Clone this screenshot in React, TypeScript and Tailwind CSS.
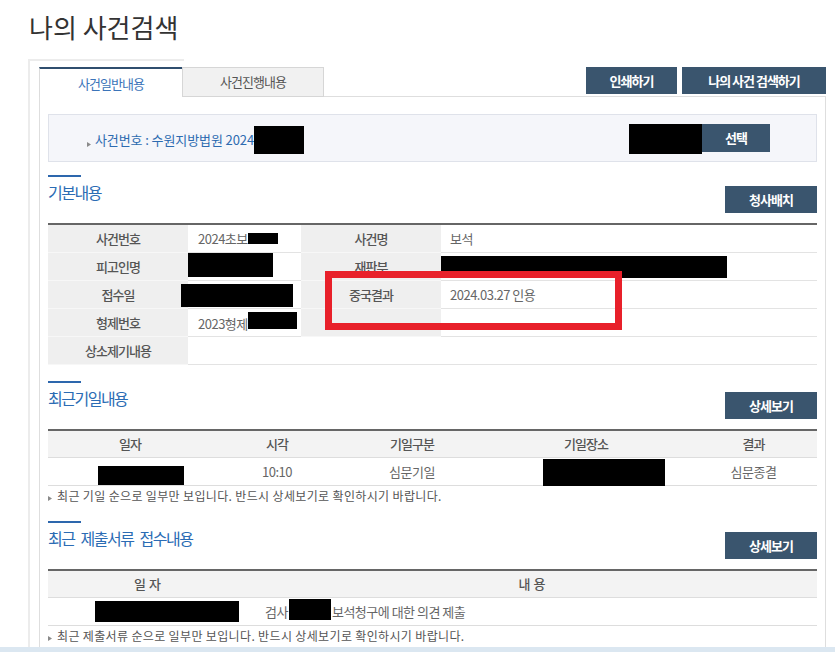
import type { ReactNode } from 'react'

const font = "font-['Noto_Sans_CJK_KR','Noto_Sans',sans-serif]"

function DarkButton({ children, className }: { children: ReactNode; className: string }) {
  return (
    <div
      className={`flex items-center justify-center bg-[#3a556e] text-[13px] font-semibold tracking-[-1px] text-white ${className}`}
    >
      {children}
    </div>
  )
}

function Bullet({ className }: { className: string }) {
  return (
    <svg width="4" height="5" viewBox="0 0 4 5" className={className}>
      <path d="M0 0 L4 2.5 L0 5 Z" fill="#8a8a8a" />
    </svg>
  )
}

function Black({ className }: { className: string }) {
  return <span className={`inline-block shrink-0 bg-black ${className}`} />
}

function SectionHeader({ title, button }: { title: string; button: string }) {
  return (
    <div className="flex h-[48px] justify-between">
      <div>
        <div className="h-[2px] w-[33px] bg-[#2d67ad]" />
        <div className="mt-[4px] text-[16px] leading-[22px] tracking-[-1.5px] text-[#2b6cb4] [word-spacing:4px]">
          {title}
        </div>
      </div>
      <DarkButton className="mt-[11px] h-[27px] w-[92px]">{button}</DarkButton>
    </div>
  )
}

function Note({ children }: { children: ReactNode }) {
  return (
    <div className="flex h-[19px] items-center text-[12px] tracking-[0.35px] text-[#555]">
      <Bullet className="mt-[6px] mr-[5px]" />
      {children}
    </div>
  )
}

function InfoRow({ label, value, label2, value2 }: { label: string; value: ReactNode; label2?: string; value2?: ReactNode }) {
  return (
    <div className="flex h-[28px]">
      <div className="flex w-[140px] items-center justify-center border-b border-[#f7f7f7] bg-[#efefef] font-medium tracking-[-1px] text-[#555]">
        {label}
      </div>
      {label2 === undefined ? (
        <div className="flex-1 border-b border-[#e3e3e3]">{value}</div>
      ) : (
        <>
          <div className="w-[113px] border-b border-[#e3e3e3]">{value}</div>
          <div className="flex w-[140px] items-center justify-center border-b border-[#f7f7f7] bg-[#efefef] font-medium tracking-[-1px] text-[#555]">
            {label2}
          </div>
          <div className="flex-1 border-b border-[#e3e3e3]">{value2}</div>
        </>
      )}
    </div>
  )
}

const headCell = 'flex items-center justify-center font-medium tracking-[-1px] text-[#555]'
const dataCell = 'flex items-center justify-center'

export default function App() {
  return (
    <div className={`relative h-[652px] w-[835px] overflow-hidden bg-white ${font}`}>
      {/* Page title */}
      <div className="h-[59px] pl-[29px] pt-[12px] text-[26px] leading-[30px] tracking-[0px] text-[#333]">
        나의 사건검색
      </div>

      <div className="ml-[28px] h-[589px] border-l-2 border-[#ececec]">
        <div className="h-[2px] w-[154px] bg-[#ececec]" />
        <div className="pl-[9px] pt-[6px]">
          {/* Tabs + top buttons */}
          <div className="flex h-[30px] w-[787px]">
            <div className="flex w-[143px] items-start justify-center border-l border-t-2 border-[#dcdcdc] border-t-[#2f4e6e] bg-white pt-[5px] text-[13px] tracking-[-1px] text-[#3b74b9]">
              사건일반내용
            </div>
            <div className="flex w-[142px] items-start justify-center border border-[#d6d6d6] bg-[#f1f1f1] pt-[4px] text-[13px] tracking-[-1px] text-[#555]">
              사건진행내용
            </div>
            <div className="flex-1 border-b border-[#dedede]" />
            <div className="flex gap-[5px] border-b border-[#dedede]">
              <DarkButton className="h-[27px] w-[91px]">인쇄하기</DarkButton>
              <DarkButton className="h-[27px] w-[144px]">나의 사건 검색하기</DarkButton>
            </div>
          </div>

          {/* Panel */}
          <div className="h-[551px] w-[787px] border-x border-[#dedede] px-[8px] pt-[17px] text-[13px] tracking-[-0.5px] text-[#666]">
            <div className="flex h-[48px] justify-between border border-[#dfe2ea] bg-[#f5f6fa]">
              <div className="mt-[3px] flex items-center pl-[38px]">
                <Bullet className="mt-[9px] mr-[4px]" />
                <span className="tracking-[-0.1px] text-[#2d6bb0]">사건번호 : 수원지방법원 2024</span>
                <Black className="h-[28px] w-[50px]" />
              </div>
              <div className="mr-[46px] mt-[9px] flex">
                <Black className="h-[30px] w-[73px]" />
                <DarkButton className="h-[28px] w-[68px]">선택</DarkButton>
              </div>
            </div>

            {/* 기본내용 */}
            <div className="mt-[13px]">
              <SectionHeader title="기본내용" button="청사배치" />
              <div className="border-t-2 border-[#666]">
                <InfoRow
                  label="사건번호"
                  value={
                    <div className="flex h-full items-center pl-[10px]">
                      2024초보
                      <Black className="h-[11px] w-[30px]" />
                    </div>
                  }
                  label2="사건명"
                  value2={<div className="flex h-full items-center pl-[9px]">보석</div>}
                />
                <InfoRow
                  label="피고인명"
                  value={<Black className="h-[24px] w-[85px]" />}
                  label2="재판부"
                  value2={<Black className="mt-[3px] h-[22px] w-[286px]" />}
                />
                <InfoRow
                  label="접수일"
                  value={<Black className="relative -ml-[7px] mt-[3px] h-[23px] w-[112px]" />}
                  label2="중국결과"
                  value2={<div className="flex h-full items-center pl-[9px]">2024.03.27 인용</div>}
                />
                <InfoRow
                  label="형제번호"
                  value={
                    <div className="flex h-full items-start pl-[10px] pt-[3px]">
                      <span className="mt-[2px]">2023형제</span>
                      <Black className="h-[17px] w-[49px]" />
                    </div>
                  }
                  label2=""
                  value2={null}
                />
                <InfoRow label="상소제기내용" value={null} />
              </div>
            </div>

            {/* 최근기일내용 */}
            <div className="mt-[16px]">
              <SectionHeader title="최근기일내용" button="상세보기" />
              <div className="border-t-2 border-[#666]">
                <div className="flex h-[27px] border-b border-[#dddddd] bg-[#f3f3f3]">
                  <div className={`${headCell} w-[164px]`}>일자</div>
                  <div className={`${headCell} w-[130px]`}>시각</div>
                  <div className={`${headCell} w-[140px]`}>기일구분</div>
                  <div className={`${headCell} w-[208px]`}>기일장소</div>
                  <div className={`${headCell} flex-1`}>결과</div>
                </div>
                <div className="flex h-[28px] border-b border-[#dddddd]">
                  <div className="w-[164px] pl-[50px] pt-[8px]">
                    <Black className="h-[19px] w-[86px]" />
                  </div>
                  <div className={`${dataCell} w-[130px]`}>10:10</div>
                  <div className={`${dataCell} w-[140px]`}>심문기일</div>
                  <div className="w-[208px] pl-[61px] pt-[1px]">
                    <Black className="h-[27px] w-[122px]" />
                  </div>
                  <div className={`${dataCell} flex-1`}>심문종결</div>
                </div>
              </div>
              <Note>최근 기일 순으로 일부만 보입니다. 반드시 상세보기로 확인하시기 바랍니다.</Note>
            </div>

            {/* 최근 제출서류 접수내용 */}
            <div className="mt-[16px]">
              <SectionHeader title="최근 제출서류 접수내용" button="상세보기" />
              <div className="border-t-2 border-[#666]">
                <div className="flex h-[27px] border-b border-[#dddddd] bg-[#f3f3f3]">
                  <div className={`${headCell} w-[198px] [word-spacing:2px]`}>일 자</div>
                  <div className={`${headCell} flex-1 [word-spacing:2px]`}>내 용</div>
                </div>
                <div className="flex h-[28px] border-b border-[#dddddd]">
                  <div className="w-[198px] pl-[47px] pt-[3px]">
                    <Black className="h-[21px] w-[144px]" />
                  </div>
                  <div className="flex flex-1 items-start pl-[19px] pt-[1px]">
                    <span className="mt-[3px]">검사</span>
                    <Black className="mx-[1px] h-[21px] w-[42px]" />
                    <span className="mt-[3px]">보석청구에 대한 의견 제출</span>
                  </div>
                </div>
              </div>
              <Note>최근 제출서류 순으로 일부만 보입니다. 반드시 상세보기로 확인하시기 바랍니다.</Note>
            </div>
          </div>
        </div>
      </div>

      {/* bottom strip of the window */}
      <div className="absolute bottom-0 left-0 h-[5px] w-full bg-[#dbe7f1]" />

      {/* highlight */}
      <div className="absolute left-[325px] top-[271px] h-[59px] w-[297px] border-[7px] border-[#e8202a]" />
    </div>
  )
}
